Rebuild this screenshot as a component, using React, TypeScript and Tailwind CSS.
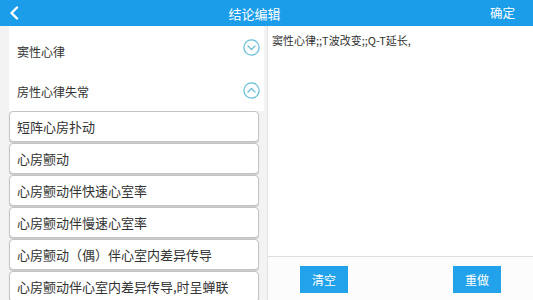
const font = { fontFamily: '"Noto Sans CJK SC", "Noto Sans", sans-serif' };

function CircleChevron({ up }: { up?: boolean }) {
  return (
    <svg width="17" height="17" viewBox="0 0 17 17" fill="none" stroke="#6cc0da" strokeWidth="1.3">
      <circle cx="8.5" cy="8.5" r="7.6" />
      {up ? (
        <path d="M5 10 L8.5 6.5 L12 10" strokeLinecap="round" strokeLinejoin="round" />
      ) : (
        <path d="M5 7 L8.5 10.5 L12 7" strokeLinecap="round" strokeLinejoin="round" />
      )}
    </svg>
  );
}

const items = [
  "短阵心房扑动",
  "心房颤动",
  "心房颤动伴快速心室率",
  "心房颤动伴慢速心室率",
  "心房颤动（偶）伴心室内差异传导",
  "心房颤动伴心室内差异传导,时呈蝉联",
];

export default function App() {
  return (
    <div className="w-[533px] h-[300px] overflow-hidden flex flex-col bg-white text-[#333]" style={font}>
      <div className="h-[26px] shrink-0 bg-[#1c9de9] flex items-center justify-between px-[9px] text-white">
        <svg width="10" height="14" viewBox="0 0 10 14" fill="none" stroke="white" strokeWidth="2.4">
          <path d="M8 1.5 L2.5 7 L8 12.5" strokeLinecap="round" strokeLinejoin="round" />
        </svg>
        <div className="text-[13px] leading-none">结论编辑</div>
        <div className="text-[12.5px] leading-none pr-[9px]">确定</div>
      </div>
      <div className="flex flex-1 min-h-0">
        <div className="w-[268px] shrink-0 bg-[#f3f3f3] border-r border-[#e2e2e2] pl-[9px] pr-[8px] flex flex-col">
          <div className="bg-white -mr-[5px] flex flex-col">
            <div className="h-[43px] flex items-center justify-between pl-[8px] pr-[4px]">
              <span className="text-[12px] pt-[8px]">窦性心律</span>
              <CircleChevron />
            </div>
            <div className="h-[42px] flex items-center justify-between pl-[8px] pr-[4px]">
              <span className="text-[12px] pt-[3px]">房性心律失常</span>
              <CircleChevron up />
            </div>
          </div>
          <div className="flex flex-col gap-[1px]">
            {items.map((t) => (
              <div
                key={t}
                className="h-[31px] shrink-0 bg-white rounded-[4px] border border-[#c4c4c4] shadow-[0_1px_1px_rgba(0,0,0,0.18)] flex items-center pl-[7px] text-[13px] whitespace-nowrap overflow-hidden"
              >
                {t}
              </div>
            ))}
          </div>
        </div>
        <div className="flex-1 flex flex-col">
          <div className="h-[231px] border-b border-[#dedede] px-[4px] pt-[7px] text-[11px] leading-[14px]">
            窦性心律;;T波改变;;Q-T延长,
          </div>
          <div className="flex-1 flex items-start justify-between pl-[32px] pr-[32px] pt-[9px] bg-[#fcfcfc]">
            <button className="w-[48px] h-[27px] bg-[#22a2ea] text-white text-[12px]">清空</button>
            <button className="w-[48px] h-[27px] bg-[#22a2ea] text-white text-[12px]">重做</button>
          </div>
        </div>
      </div>
    </div>
  );
}
